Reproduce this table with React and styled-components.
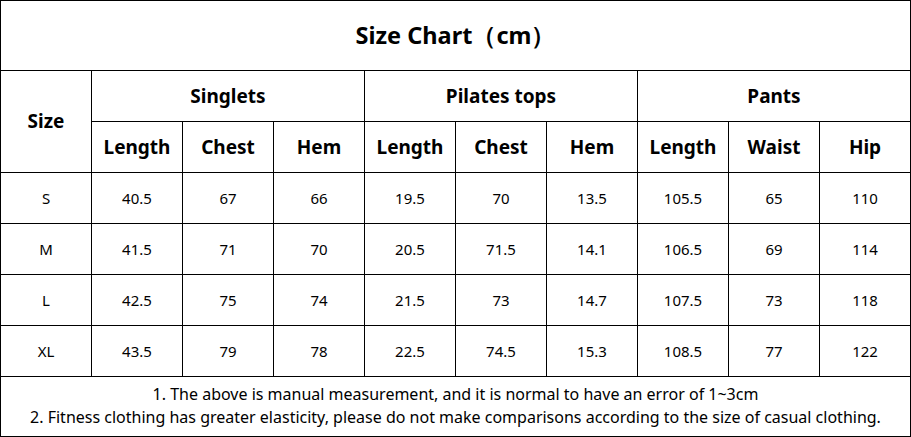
import React from 'react';
import styled, { createGlobalStyle } from 'styled-components';

const GlobalStyle = createGlobalStyle`
  html, body {
    margin: 0;
    padding: 0;
    background: #fff;
  }
  body {
    font-family: "Noto Sans", "Open Sans", sans-serif;
    color: #000;
  }
`;

const Chart = styled.div`
  display: grid;
  width: 911px;
  box-sizing: border-box;
  grid-template-columns: repeat(10, 90px);
  grid-template-rows: 69px repeat(6, 50px) 59px;
  gap: 1px;
  padding: 1px;
  background: #000;
`;

const Cell = styled.div`
  background: #fff;
  display: flex;
  align-items: center;
  justify-content: center;
  padding-bottom: 1px;
  font-size: ${p => (p.$head ? '19px' : '15px')};
  font-weight: ${p => (p.$head ? 700 : 400)};
  grid-column: ${p => (p.$span ? `span ${p.$span}` : 'auto')};
  grid-row: ${p => (p.$rows ? `span ${p.$rows}` : 'auto')};
  white-space: nowrap;
`;

const Title = styled.div`
  grid-column: 1 / -1;
  background: #fff;
  display: flex;
  align-items: center;
  justify-content: center;
  font-size: 23.5px;
  font-weight: 700;
`;

const Notes = styled.div`
  grid-column: 1 / -1;
  background: #fff;
  display: flex;
  flex-direction: column;
  align-items: center;
  justify-content: center;
  font-size: 16px;
  line-height: 23px;
  padding-bottom: 1px;
`;

const groups = [
  { name: 'Singlets', cols: ['Length', 'Chest', 'Hem'] },
  { name: 'Pilates tops', cols: ['Length', 'Chest', 'Hem'] },
  { name: 'Pants', cols: ['Length', 'Waist', 'Hip'] },
];

const rows = [
  ['S', '40.5', '67', '66', '19.5', '70', '13.5', '105.5', '65', '110'],
  ['M', '41.5', '71', '70', '20.5', '71.5', '14.1', '106.5', '69', '114'],
  ['L', '42.5', '75', '74', '21.5', '73', '14.7', '107.5', '73', '118'],
  ['XL', '43.5', '79', '78', '22.5', '74.5', '15.3', '108.5', '77', '122'],
];

export default function App() {
  return (
    <>
      <GlobalStyle />
      <Chart>
        <Title>Size Chart（cm）</Title>
        <Cell $head $rows={2}>Size</Cell>
        {groups.map(g => (
          <Cell key={g.name} $head $span={3}>{g.name}</Cell>
        ))}
        {groups.flatMap(g => g.cols.map((c, i) => (
          <Cell key={g.name + i} $head>{c}</Cell>
        )))}
        {rows.flatMap(r => r.map((v, i) => (
          <Cell key={r[0] + i}>{v}</Cell>
        )))}
        <Notes>
          <div>1. The above is manual measurement, and it is normal to have an error of 1~3cm</div>
          <div>2. Fitness clothing has greater elasticity, please do not make comparisons according to the size of casual clothing.</div>
        </Notes>
      </Chart>
    </>
  );
}
